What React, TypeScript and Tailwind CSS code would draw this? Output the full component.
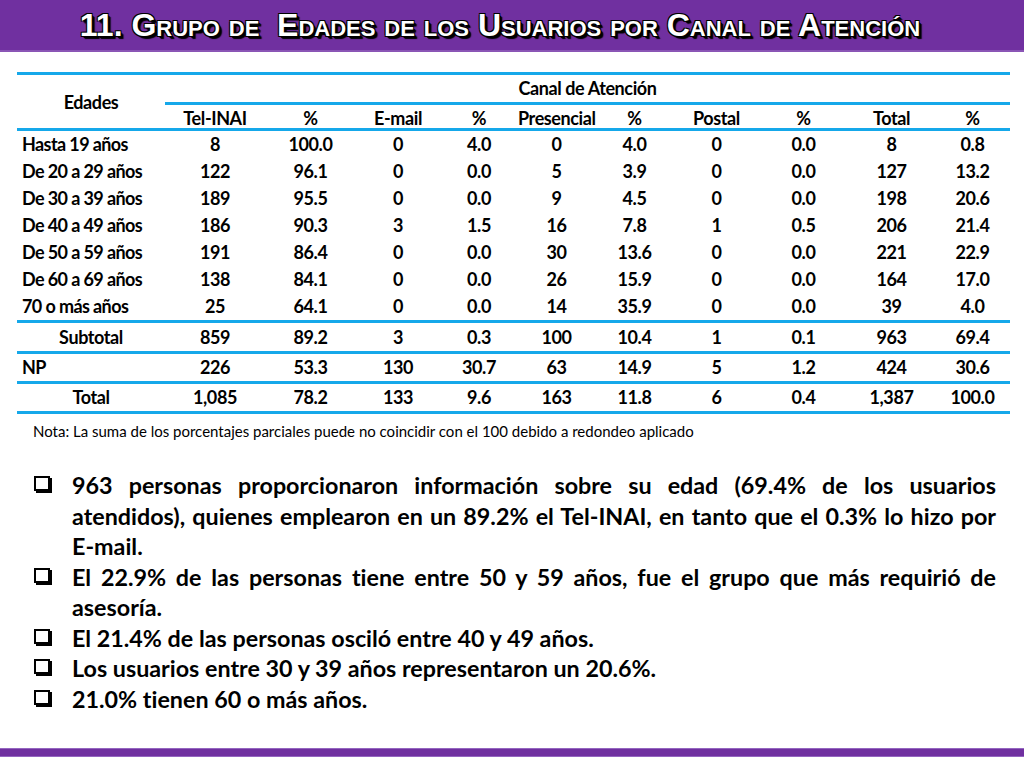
import React from "react";

const rows: string[][] = [
  ["Hasta 19 años", "8", "100.0", "0", "4.0", "0", "4.0", "0", "0.0", "8", "0.8"],
  ["De 20 a 29 años", "122", "96.1", "0", "0.0", "5", "3.9", "0", "0.0", "127", "13.2"],
  ["De 30 a 39 años", "189", "95.5", "0", "0.0", "9", "4.5", "0", "0.0", "198", "20.6"],
  ["De 40 a 49 años", "186", "90.3", "3", "1.5", "16", "7.8", "1", "0.5", "206", "21.4"],
  ["De 50 a 59 años", "191", "86.4", "0", "0.0", "30", "13.6", "0", "0.0", "221", "22.9"],
  ["De 60 a 69 años", "138", "84.1", "0", "0.0", "26", "15.9", "0", "0.0", "164", "17.0"],
  ["70 o más años", "25", "64.1", "0", "0.0", "14", "35.9", "0", "0.0", "39", "4.0"],
];

const subtotal = ["Subtotal", "859", "89.2", "3", "0.3", "100", "10.4", "1", "0.1", "963", "69.4"];
const np = ["NP", "226", "53.3", "130", "30.7", "63", "14.9", "5", "1.2", "424", "30.6"];
const total = ["Total", "1,085", "78.2", "133", "9.6", "163", "11.8", "6", "0.4", "1,387", "100.0"];

const heads = ["Tel-INAI", "%", "E-mail", "%", "Presencial", "%", "Postal", "%", "Total", "%"];

const GRID = "grid grid-cols-[148px_100px_91px_84px_78px_77px_79px_85px_89px_87px_75px]";

function Line() {
  return <div className="h-[3px] bg-[#15a8ea]" />;
}

function Row({ cells, h, labelCenter }: { cells: string[]; h: string; labelCenter?: boolean }) {
  return (
    <div className={`${GRID} ${h} items-center`}>
      {cells.map((c, i) => (
        <div
          key={i}
          className={
            i === 0
              ? labelCenter
                ? "text-center whitespace-nowrap"
                : "pl-[5px] whitespace-nowrap tracking-[-0.6px]"
              : "text-center"
          }
        >
          {c}
        </div>
      ))}
    </div>
  );
}

function Bullet({ children }: { children: React.ReactNode }) {
  return (
    <div className="flex">
      <div className="w-[38px] shrink-0 pt-[6px]">
        <div className="w-[16px] h-[15px] border-2 border-black shadow-[2px_2px_0_#000]" />
      </div>
      <div className="flex-1 text-justify">{children}</div>
    </div>
  );
}

export default function App() {
  return (
    <div className="w-[1024px] h-[768px] bg-white flex flex-col overflow-hidden font-['Lato',sans-serif] text-black [font-variant-ligatures:none]">
      <div className="h-[52px] bg-[#7030a0] border-b-2 border-[#8a55b5] flex items-center justify-center">
        <div
          className="mr-[24px] text-white font-bold text-[32px] leading-none [font-variant:small-caps] font-['Liberation_Sans',Arial,sans-serif] [text-shadow:-1px_-1px_0_#000,1px_-1px_0_#000,-1px_1px_0_#000,1px_1px_0_#000,2px_2px_0_#000,3px_3px_1px_#000] whitespace-pre"
        >
          {"11. Grupo de  Edades de los Usuarios por Canal de Atención"}
        </div>
      </div>

      <div className="ml-[17px] w-[993px] mt-[20px] font-bold text-[18px] tracking-[-0.4px]">
        <Line />
        <div className={`${GRID}`}>
          <div className="row-span-2 flex items-center justify-center h-[53px] pt-[2px]">Edades</div>
          <div className="col-span-10 flex flex-col">
            <div className="h-[27px] flex items-center justify-center">Canal de Atención</div>
            <Line />
            <div className="grid grid-cols-[100px_91px_84px_78px_77px_79px_85px_89px_87px_75px] h-[23px] items-center">
              {heads.map((h, i) => (
                <div key={i} className="text-center">
                  {h}
                </div>
              ))}
            </div>
          </div>
        </div>
        <Line />
        {rows.map((r, i) => (
          <Row key={i} cells={r} h="h-[27px]" />
        ))}
        <Line />
        <Row cells={subtotal} h="h-[28px]" labelCenter />
        <Line />
        <Row cells={np} h="h-[27px]" />
        <Line />
        <Row cells={total} h="h-[27px]" labelCenter />
        <Line />
      </div>

      <div className="ml-[33px] mt-[8px] text-[15px] leading-[18px]">
        Nota: La suma de los porcentajes parciales puede no coincidir con el 100 debido a redondeo aplicado
      </div>

      <div className="ml-[34px] w-[962px] mt-[30px] font-bold text-[23.3px] leading-[30.5px]">
        <Bullet>
          963 personas proporcionaron información sobre su edad (69.4% de los usuarios atendidos), quienes emplearon en un 89.2% el Tel-INAI, en tanto que el 0.3% lo hizo por E-mail.
        </Bullet>
        <Bullet>
          El 22.9% de las personas tiene entre 50 y 59 años, fue el grupo que más requirió de asesoría.
        </Bullet>
        <Bullet>El 21.4% de las personas osciló entre 40 y 49 años.</Bullet>
        <Bullet>Los usuarios entre 30 y 39 años representaron un 20.6%.</Bullet>
        <Bullet>21.0% tienen 60 o más años.</Bullet>
      </div>

      <div className="mt-auto mb-[11px] h-[9px] bg-[#7030a0] border-y border-[#9466c0]" />
    </div>
  );
}
